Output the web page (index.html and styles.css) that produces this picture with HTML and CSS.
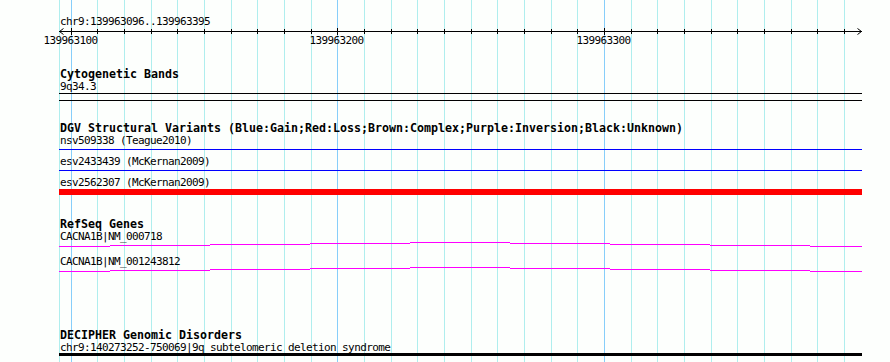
FILE: index.html
```html
<!DOCTYPE html>
<html lang="en">
<head>
  <meta charset="UTF-8">
  <title>chr9:139963096..139963395</title>
  <link rel="stylesheet" href="styles.css">
</head>
<body>
  <div class="panel">
    <!-- grid lines every 10 bp, major every 100 bp -->
    <svg class="grid" width="890" height="362" shape-rendering="crispEdges">
      <rect class="minor" x="59" y="0" width="1" height="362"/>
      <rect class="major" x="71" y="0" width="1" height="362"/>
      <rect class="minor" x="97" y="0" width="1" height="362"/>
      <rect class="minor" x="124" y="0" width="1" height="362"/>
      <rect class="minor" x="151" y="0" width="1" height="362"/>
      <rect class="minor" x="177" y="0" width="1" height="362"/>
      <rect class="minor" x="204" y="0" width="1" height="362"/>
      <rect class="minor" x="231" y="0" width="1" height="362"/>
      <rect class="minor" x="257" y="0" width="1" height="362"/>
      <rect class="minor" x="284" y="0" width="1" height="362"/>
      <rect class="minor" x="311" y="0" width="1" height="362"/>
      <rect class="major" x="337" y="0" width="1" height="362"/>
      <rect class="minor" x="364" y="0" width="1" height="362"/>
      <rect class="minor" x="391" y="0" width="1" height="362"/>
      <rect class="minor" x="417" y="0" width="1" height="362"/>
      <rect class="minor" x="444" y="0" width="1" height="362"/>
      <rect class="minor" x="471" y="0" width="1" height="362"/>
      <rect class="minor" x="497" y="0" width="1" height="362"/>
      <rect class="minor" x="524" y="0" width="1" height="362"/>
      <rect class="minor" x="551" y="0" width="1" height="362"/>
      <rect class="minor" x="577" y="0" width="1" height="362"/>
      <rect class="major" x="604" y="0" width="1" height="362"/>
      <rect class="minor" x="631" y="0" width="1" height="362"/>
      <rect class="minor" x="657" y="0" width="1" height="362"/>
      <rect class="minor" x="684" y="0" width="1" height="362"/>
      <rect class="minor" x="711" y="0" width="1" height="362"/>
      <rect class="minor" x="737" y="0" width="1" height="362"/>
      <rect class="minor" x="764" y="0" width="1" height="362"/>
      <rect class="minor" x="791" y="0" width="1" height="362"/>
      <rect class="minor" x="817" y="0" width="1" height="362"/>
      <rect class="minor" x="844" y="0" width="1" height="362"/>
    </svg>

    <div class="tracks">
      <div class="ruler">
        <div class="ruler-title">chr9:139963096..139963395</div>
        <svg class="ruler-axis" width="803" height="20">
          <g shape-rendering="crispEdges">
            <rect x="0" y="3" width="803" height="1"/>
            <rect x="12" y="0" width="1" height="7"/>
            <rect x="38" y="1" width="1" height="5"/>
            <rect x="65" y="1" width="1" height="5"/>
            <rect x="92" y="1" width="1" height="5"/>
            <rect x="118" y="1" width="1" height="5"/>
            <rect x="145" y="1" width="1" height="5"/>
            <rect x="172" y="1" width="1" height="5"/>
            <rect x="198" y="1" width="1" height="5"/>
            <rect x="225" y="1" width="1" height="5"/>
            <rect x="252" y="1" width="1" height="5"/>
            <rect x="278" y="0" width="1" height="7"/>
            <rect x="305" y="1" width="1" height="5"/>
            <rect x="332" y="1" width="1" height="5"/>
            <rect x="358" y="1" width="1" height="5"/>
            <rect x="385" y="1" width="1" height="5"/>
            <rect x="412" y="1" width="1" height="5"/>
            <rect x="438" y="1" width="1" height="5"/>
            <rect x="465" y="1" width="1" height="5"/>
            <rect x="492" y="1" width="1" height="5"/>
            <rect x="518" y="1" width="1" height="5"/>
            <rect x="545" y="0" width="1" height="7"/>
            <rect x="572" y="1" width="1" height="5"/>
            <rect x="598" y="1" width="1" height="5"/>
            <rect x="625" y="1" width="1" height="5"/>
            <rect x="652" y="1" width="1" height="5"/>
            <rect x="678" y="1" width="1" height="5"/>
            <rect x="705" y="1" width="1" height="5"/>
            <rect x="732" y="1" width="1" height="5"/>
            <rect x="758" y="1" width="1" height="5"/>
            <rect x="785" y="1" width="1" height="5"/>
          </g>
          <polyline class="arrow" points="4.5,0.5 0.5,3.5 4.5,6.5"/>
          <polyline class="arrow" points="798.5,0.5 802.5,3.5 798.5,6.5"/>
          <text class="tick-label" x="11.5" y="16">139963100</text>
          <text class="tick-label" x="277.5" y="16">139963200</text>
          <text class="tick-label" x="544.5" y="16">139963300</text>
        </svg>
      </div>

      <div class="track track-cyto">
        <div class="track-key">Cytogenetic Bands</div>
        <div class="feature-label">9q34.3</div>
        <div class="band"></div>
      </div>

      <div class="track track-dgv">
        <div class="track-key">DGV Structural Variants (Blue:Gain;Red:Loss;Brown:Complex;Purple:Inversion;Black:Unknown)</div>
        <div class="feature-label">nsv509338 (Teague2010)</div>
        <div class="variant gain"></div>
        <div class="feature-label spaced">esv2433439 (McKernan2009)</div>
        <div class="variant gain"></div>
        <div class="feature-label spaced">esv2562307 (McKernan2009)</div>
        <div class="variant loss"></div>
      </div>

      <div class="track track-refseq">
        <div class="track-key">RefSeq Genes</div>
        <div class="feature-label">CACNA1B|NM_000718</div>
        <svg class="transcript" width="803" height="5" shape-rendering="crispEdges">
          <rect x="0" y="4" width="51" height="1"/>
          <rect x="51" y="3" width="100" height="1"/>
          <rect x="151" y="2" width="100" height="1"/>
          <rect x="251" y="1" width="100" height="1"/>
          <rect x="351" y="0" width="100" height="1"/>
          <rect x="451" y="1" width="100" height="1"/>
          <rect x="551" y="2" width="100" height="1"/>
          <rect x="651" y="3" width="100" height="1"/>
          <rect x="751" y="4" width="52" height="1"/>
        </svg>
        <div class="feature-label gene-gap">CACNA1B|NM_001243812</div>
        <svg class="transcript" width="803" height="5" shape-rendering="crispEdges">
          <rect x="0" y="4" width="51" height="1"/>
          <rect x="51" y="3" width="100" height="1"/>
          <rect x="151" y="2" width="100" height="1"/>
          <rect x="251" y="1" width="100" height="1"/>
          <rect x="351" y="0" width="100" height="1"/>
          <rect x="451" y="1" width="100" height="1"/>
          <rect x="551" y="2" width="100" height="1"/>
          <rect x="651" y="3" width="100" height="1"/>
          <rect x="751" y="4" width="52" height="1"/>
        </svg>
      </div>

      <div class="track track-decipher">
        <div class="track-key">DECIPHER Genomic Disorders</div>
        <div class="feature-label">chr9:140273252-750069|9q subtelomeric deletion syndrome</div>
        <div class="disorder"></div>
      </div>
    </div>
  </div>
</body>
</html>
```

FILE: styles.css
```css
body { margin: 0; background: #fdfffd; }
.panel { position: relative; width: 890px; height: 362px; overflow: hidden; background: #fdfffd; color: #000; font-family: "DejaVu Sans Mono", monospace; }
.grid { position: absolute; top: 0; left: 0; }
.grid .minor { fill: #afeeee; }
.grid .major { fill: #87cefa; }
.tracks { position: relative; margin-left: 59px; width: 803px; padding-top: 15px; }

.ruler-title, .feature-label { font-size: 11px; letter-spacing: -0.62px; line-height: 13px; padding-left: 1px; white-space: nowrap; }
.track-key { font-size: 11.63px; font-weight: bold; line-height: 12px; padding-left: 1px; white-space: nowrap; }

.ruler-axis { display: block; overflow: visible; fill: #000; }
.ruler-axis .arrow { fill: none; stroke: #000; stroke-width: 1; }
.tick-label { font-family: "DejaVu Sans Mono", monospace; font-size: 11px; letter-spacing: -0.62px; text-anchor: middle; }

.track-cyto { margin-top: 20px; }
.track-dgv { margin-top: 21px; }
.track-refseq { margin-top: 23px; }
.track-decipher { margin-top: 57px; }

.band { height: 6px; border-top: 1px solid #000; border-bottom: 1px solid #000; }

.variant.gain { margin-top: 2px; height: 1px; background: #0000ff; }
.variant.loss { height: 6px; background: #ff0000; }
.feature-label.spaced { margin-top: 5px; }

.transcript { display: block; margin-top: -1px; fill: #ff00ff; }
.feature-label.gene-gap { margin-top: 8px; }

.disorder { margin-top: -1px; height: 3px; background: #000; }
```
